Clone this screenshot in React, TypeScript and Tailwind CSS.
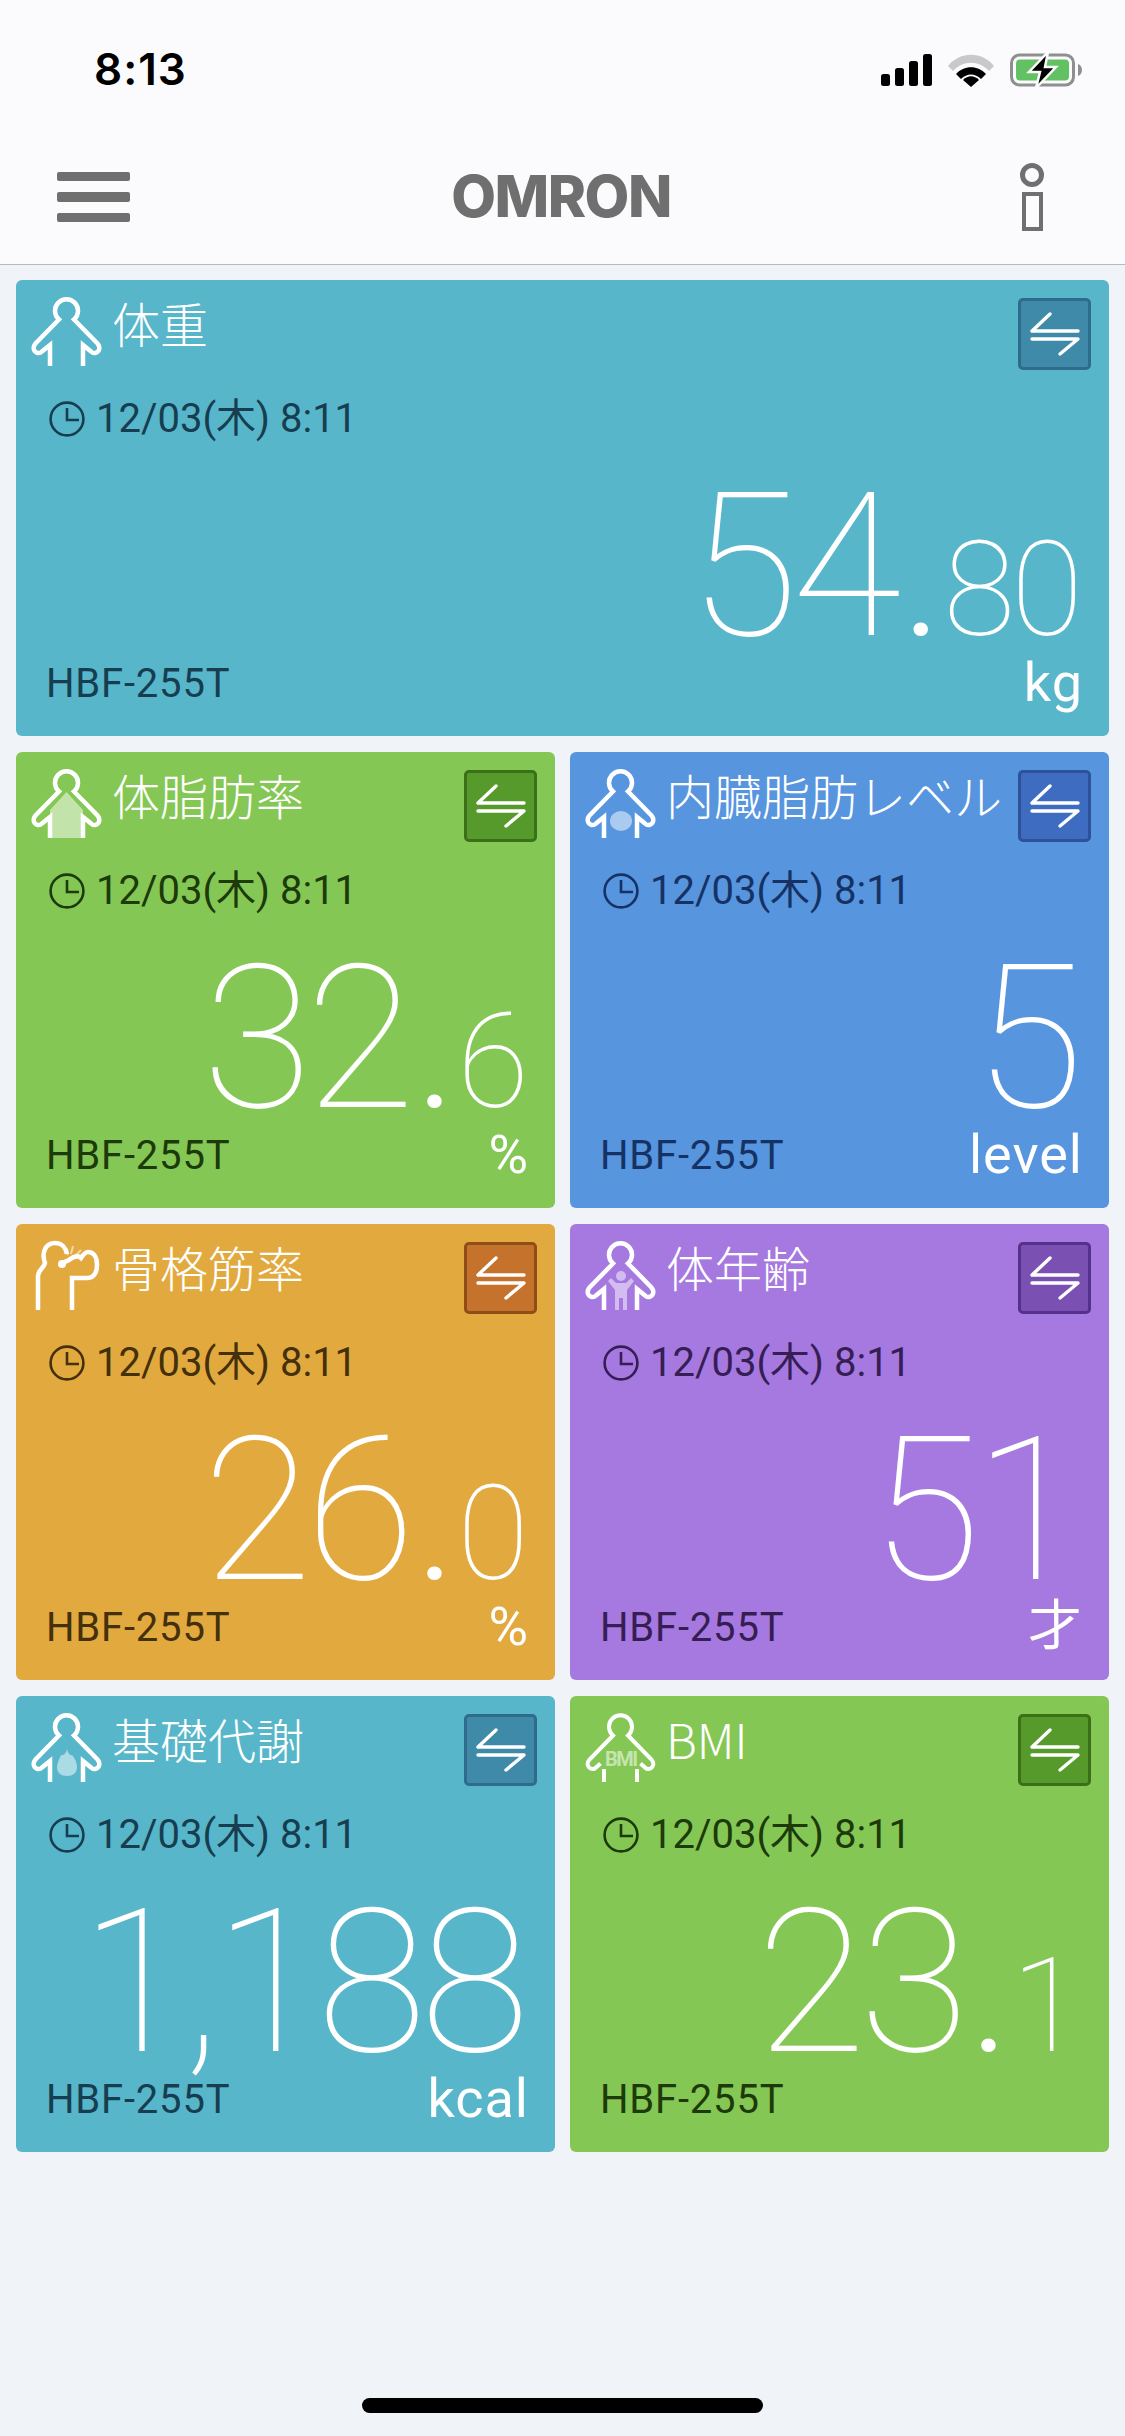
import React from 'react';

const numFont = "font-['Roboto','Noto_Sans_CJK_JP',sans-serif]";
const jpFont = "font-['Noto_Sans_CJK_JP','Roboto',sans-serif]";

type IconKind = 'weight' | 'fat' | 'visceral' | 'muscle' | 'age' | 'metabolism' | 'bmi';

const BodyOutline: React.FC = () => (
  <path
    d="M19 70 V49 L11 55.5 C9.5 57 7.5 57.5 5.5 56.5 C2.5 55 1.5 51 4.5 47.5 L28 23.5 A11.5 11.5 0 1 1 43 23.5 L66.5 47.5 C69.5 51 68.5 55 65.5 56.5 C63.5 57.5 61.5 57 60 55.5 L52 49 V70"
    fill="none"
    stroke="#fff"
    strokeWidth="4.5"
  />
);

// The BMI figure leaves room for its label, so the arms stop short and the legs start lower
const OpenBodyOutline: React.FC = () => (
  <path
    d="M15.5 51.5 L11 55.5 C9.5 57 7.5 57.5 5.5 56.5 C2.5 55 1.5 51 4.5 47.5 L28 23.5 A11.5 11.5 0 1 1 43 23.5 L66.5 47.5 C69.5 51 68.5 55 65.5 56.5 C63.5 57.5 61.5 57 60 55.5 L55.5 51.5 M19 57 V70 M52 57 V70"
    fill="none"
    stroke="#fff"
    strokeWidth="4"
  />
);

const BodyIcon: React.FC<{ kind: IconKind }> = ({ kind }) => {
  if (kind === 'muscle') {
    return (
      <svg width="72" height="72" viewBox="0 0 72 72" className="shrink-0">
        <g fill="none" stroke="#fff" strokeWidth="4.5">
          <path d="M7 70 V36 C7 30 13 28 14 23 C10 12 15 3 24 3 C31 3 35 8 36 14" />
          <path d="M41 70 V38 H57 C63 38 66 32 66 25 C66 16 62 12 57 12 C54 12 52 15 50 18 C47 15 42 17 38 20 C34 22 30 23 29 25" />
        </g>
        <circle cx="31" cy="24" r="4" fill="#fff" />
        <path d="M34 8 L37 15 M42 6 L40 14 M50 10 L45 15" stroke="#fff" strokeOpacity="0.55" strokeWidth="2" fill="none" />
      </svg>
    );
  }
  return (
    <svg width="72" height="72" viewBox="0 0 72 72" className="shrink-0">
      {kind === 'fat' && (
        <path d="M35.5 24 L52 42 V70 H19 V42 Z" fill="#fff" fillOpacity="0.5" />
      )}
      {kind === 'visceral' && (
        <ellipse cx="36" cy="53" rx="11" ry="10" fill="#fff" fillOpacity="0.5" />
      )}
      {kind === 'age' && (
        <g fill="#fff" fillOpacity="0.5">
          <circle cx="36" cy="36" r="5" />
          <path d="M23 41 L26 38 L31 43 H41 L46 38 L49 41 L42 50 V70 H38 V58 H34 V70 H30 V50 Z" />
        </g>
      )}
      {kind === 'metabolism' && (
        <path d="M36 37 C37 42 40 44 41 43 C45 48 46 52 46 55 C46 61 42 64 36 64 C30 64 26 61 26 55 C26 52 28 47 30 43 C32 44 35 42 36 37 Z" fill="#fff" fillOpacity="0.5" />
      )}
      {kind === 'bmi' && (
        <text x="36.5" y="54" textAnchor="middle" fill="#fff" fillOpacity="0.55" fontFamily="Roboto, sans-serif" fontWeight="700" fontSize="20" textLength="33">BMI</text>
      )}
      {kind === 'bmi' ? <OpenBodyOutline /> : <BodyOutline />}
    </svg>
  );
};

const ClockIcon: React.FC = () => (
  <svg width="36" height="36" viewBox="0 0 36 36" fill="none" stroke="currentColor" strokeWidth="2.6" className="shrink-0">
    <circle cx="18" cy="18" r="16.4" />
    <path d="M18 7 V19 H30" />
  </svg>
);

const SwapButton: React.FC<{ className: string }> = ({ className }) => (
  <div className={`absolute top-[18px] right-[18px] w-[73px] h-[72px] rounded-[5px] border-[3px] flex items-center justify-center ${className}`}>
    <svg width="50" height="46" viewBox="0 0 50 46" fill="none" stroke="#fff" strokeWidth="3.4" strokeLinecap="round">
      <path d="M20 3 L2 20 H48" strokeLinejoin="round" />
      <path d="M2 28 H48 L30 43" strokeLinejoin="round" />
    </svg>
  </div>
);

type Metric = {
  title: string;
  icon: IconKind;
  whole: string;
  fraction?: string;
  unit: string;
  bg: string;
  ink: string;
  button: string;
  wide?: boolean;
};

const teal = { bg: 'bg-[#57b6c9]', ink: 'text-[#173e50]', button: 'bg-[#3f8aa9] border-[#2f6c8b]' };
const green = { bg: 'bg-[#85c754]', ink: 'text-[#1c3a0a]', button: 'bg-[#559a2b] border-[#3b6f18]' };
const blue = { bg: 'bg-[#5795df]', ink: 'text-[#163264]', button: 'bg-[#3e6cc1] border-[#2d5299]' };
const orange = { bg: 'bg-[#e2a93f]', ink: 'text-[#44300a]', button: 'bg-[#c5732c] border-[#8f4d17]' };
const purple = { bg: 'bg-[#a679e0]', ink: 'text-[#361e55]', button: 'bg-[#7a50b2] border-[#54318a]' };

const metrics: Metric[] = [
  { title: '体重', icon: 'weight', whole: '54', fraction: '80', unit: 'kg', wide: true, ...teal },
  { title: '体脂肪率', icon: 'fat', whole: '32', fraction: '6', unit: '%', ...green },
  { title: '内臓脂肪レベル', icon: 'visceral', whole: '5', unit: 'level', ...blue },
  { title: '骨格筋率', icon: 'muscle', whole: '26', fraction: '0', unit: '%', ...orange },
  { title: '体年齢', icon: 'age', whole: '51', unit: '才', ...purple },
  { title: '基礎代謝', icon: 'metabolism', whole: '1,188', unit: 'kcal', ...teal },
  { title: 'BMI', icon: 'bmi', whole: '23', fraction: '1', unit: '', ...green },
];

const MetricCard: React.FC<{ metric: Metric }> = ({ metric }) => (
  <div className={`relative h-[456px] rounded-[6px] overflow-hidden flex flex-col ${metric.bg} ${metric.wide ? 'col-span-2' : ''}`}>
    <SwapButton className={metric.button} />

    <div className="flex items-start gap-[9px] pt-4 pl-[15px]">
      <BodyIcon kind={metric.icon} />
      <span className={`${jpFont} -mt-[4px] font-light text-[48px] leading-[60px] text-white whitespace-nowrap`}>{metric.title}</span>
    </div>

    <div className={`${metric.ink} ${numFont} mt-[27px] ml-[33px] flex items-center gap-[11px] text-[40px] leading-[48px]`}>
      <ClockIcon />
      <span className="whitespace-nowrap">12/03(木) 8:11</span>
    </div>

    <div className={`${numFont} mt-[35px] h-[178px] pr-[32px] flex justify-end items-baseline text-white font-thin leading-[178px] whitespace-nowrap`}>
      <span className="text-[200px] tracking-[-6.5px]">{metric.whole}</span>
      {metric.fraction && (
        <>
          <span className="text-[104px] font-medium ml-3">.</span>
          <span className="text-[131px] tracking-[-4px] ml-2 -mr-[2px]">{metric.fraction}</span>
        </>
      )}
    </div>

    <div className="flex justify-between items-end pl-[30px] pr-[26px]">
      <span className={`${metric.ink} ${numFont} text-[40px] leading-[48px] tracking-[0.8px] mb-[2px]`}>HBF-255T</span>
      <span className={`${numFont} min-h-[54px] text-white text-[54px] leading-[54px] tracking-[1px]`}>{metric.unit}</span>
    </div>
  </div>
);

const StatusBar: React.FC = () => (
  <div className="h-[138px] flex items-start justify-between pt-[47px] pl-[94px] pr-[41px]">
    <span className="font-['Inter',sans-serif] font-semibold text-[44px] leading-[44px] tracking-[1px] text-black">8:13</span>
    <div className="flex items-center gap-[16px] pt-[5px]">
      <svg width="51" height="32" viewBox="0 0 51 32" fill="#000">
        <rect x="0" y="20" width="9" height="12" rx="2.5" />
        <rect x="14" y="14" width="9" height="18" rx="2.5" />
        <rect x="28" y="7" width="9" height="25" rx="2.5" />
        <rect x="42" y="0" width="9" height="32" rx="2.5" />
      </svg>
      <svg width="46" height="33" viewBox="0 0 46 33">
        <path d="M0 12 C12 -3 34 -3 46 12 L41 17 C31 6 15 6 5 17 Z" fill="#c9c9c9" />
        <path d="M8 20 C16 11 30 11 38 20 L33 25 C27 19 19 19 13 25 Z" fill="#000" />
        <path d="M15 26 C20 21 26 21 31 26 L23 33 Z" fill="#000" />
      </svg>
      <svg width="74" height="36" viewBox="0 0 74 36">
        <rect x="1.5" y="3" width="62" height="30" rx="8" fill="none" stroke="#8f8f8f" strokeWidth="3" />
        <rect x="6" y="7.5" width="53" height="21" rx="4" fill="#62c163" />
        <path d="M68 12 C71 13 72 15.5 72 18 C72 20.5 71 23 68 24 Z" fill="#8f8f8f" />
        <path d="M38 0 L19 20 H30 L26 36 L46 15 H35 Z" fill="#000" stroke="#fbfbfd" strokeWidth="2.5" />
      </svg>
    </div>
  </div>
);

const NavBar: React.FC = () => (
  <div className="h-[127px] border-b border-[#b6b9bb] flex items-start justify-between pl-[57px] pr-[81px]">
    <div className="mt-[34px] w-[73px] flex flex-col gap-[11px]">
      <div className="h-[9px] rounded-[2px] bg-[#6f6f6f]" />
      <div className="h-[10px] rounded-[2px] bg-[#6f6f6f]" />
      <div className="h-[9px] rounded-[2px] bg-[#6f6f6f]" />
    </div>
    <span className="mt-[29px] mr-[28px] font-['Inter',sans-serif] font-extrabold text-[58px] leading-[58px] text-[#6f6f6f] tracking-[-1.5px]">OMRON</span>
    <div className="mt-[25px] w-[24px] flex flex-col items-center gap-[5px]">
      <div className="size-[24px] rounded-full border-[5px] border-[#6f6f6f]" />
      <div className="w-[21px] h-[39px] border-[4px] border-[#6f6f6f]" />
    </div>
  </div>
);

export default function App() {
  return (
    <div className="w-[1125px] h-[2436px] bg-[#f0f3f7] flex flex-col">
      <div className="bg-[#fbfbfd]">
        <StatusBar />
        <NavBar />
      </div>

      <div className="grid grid-cols-2 gap-x-[15px] gap-y-4 px-4 pt-[15px]">
        {metrics.map((m) => (
          <MetricCard key={m.title} metric={m} />
        ))}
      </div>

      <div className="mt-auto mb-[23px] mx-auto w-[401px] h-[15px] rounded-full bg-black" />
    </div>
  );
}
